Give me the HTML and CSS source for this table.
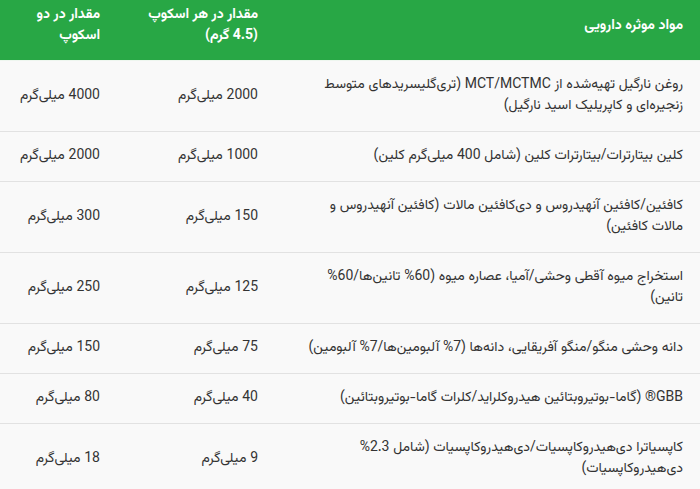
FILE: index.html
```html
<!DOCTYPE html>
<html lang="fa" dir="rtl">
<head>
<meta charset="utf-8">
<title>مواد موثره دارویی</title>
<link rel="stylesheet" href="styles.css">
</head>
<body>
<table class="ing-table">
  <thead>
    <tr>
      <th class="c1">مواد موثره دارویی</th>
      <th class="c2">مقدار در هر اسکوپ<br>(4.5 گرم)</th>
      <th class="c3">مقدار در دو<br>اسکوپ</th>
    </tr>
  </thead>
  <tbody>
    <tr>
      <td class="c1">روغن نارگیل تهیه‌شده از MCT/MCTMC (تری‌گلیسریدهای متوسط زنجیره‌ای و کاپریلیک اسید نارگیل)</td>
      <td class="c2">2000 میلی‌گرم</td>
      <td class="c3">4000 میلی‌گرم</td>
    </tr>
    <tr>
      <td class="c1">کلین بیتارترات/بیتارترات کلین (شامل 400 میلی‌گرم کلین)</td>
      <td class="c2">1000 میلی‌گرم</td>
      <td class="c3">2000 میلی‌گرم</td>
    </tr>
    <tr>
      <td class="c1">کافئین/کافئین آنهیدروس و دی‌کافئین مالات (کافئین آنهیدروس و<br>مالات کافئین)</td>
      <td class="c2">150 میلی‌گرم</td>
      <td class="c3">300 میلی‌گرم</td>
    </tr>
    <tr>
      <td class="c1">استخراج میوه آقطی وحشی/آمیا، عصاره میوه (60% تانین‌ها/60% تانین)</td>
      <td class="c2">125 میلی‌گرم</td>
      <td class="c3">250 میلی‌گرم</td>
    </tr>
    <tr>
      <td class="c1">دانه وحشی منگو/منگو آفریقایی، دانه‌ها (7% آلبومین‌ها/7% آلبومین)</td>
      <td class="c2">75 میلی‌گرم</td>
      <td class="c3">150 میلی‌گرم</td>
    </tr>
    <tr>
      <td class="c1">GBB® (گاما-بوتیروبتائین هیدروکلراید/کلرات گاما-بوتیروبتائین)</td>
      <td class="c2">40 میلی‌گرم</td>
      <td class="c3">80 میلی‌گرم</td>
    </tr>
    <tr>
      <td class="c1">کاپسیاترا دی‌هیدروکاپسیات/دی‌هیدروکاپسیات (شامل 2.3% دی‌هیدروکاپسیات)</td>
      <td class="c2">9 میلی‌گرم</td>
      <td class="c3">18 میلی‌گرم</td>
    </tr>
  </tbody>
</table>
</body>
</html>
```

FILE: styles.css
```css
html, body {
  margin: 0;
  padding: 0;
  background: #ffffff;
}
body {
  font-family: Vazirmatn, "Noto Sans Arabic", Roboto, sans-serif;
  font-size: 14px;
  line-height: 21px;
  color: #333333;
}
.ing-table {
  width: 700px;
  border-collapse: collapse;
  table-layout: fixed;
  direction: rtl;
}
.ing-table th {
  background: #28a745;
  color: #ffffff;
  font-weight: bold;
  text-align: right;
  vertical-align: middle;
  padding: 5px 17px 13px 17px;
}
.ing-table td {
  background: #f9f9f9;
  text-align: right;
  vertical-align: middle;
  padding: 14px 17px;
  border-top: 1px solid #e2e2e2;
}
.ing-table tbody tr:first-child td {
  border-top-color: #eef6ef;
}
.c1 { width: 391px; }
.c2 { width: 124px; }
.c3 { width: 83px; }
```
